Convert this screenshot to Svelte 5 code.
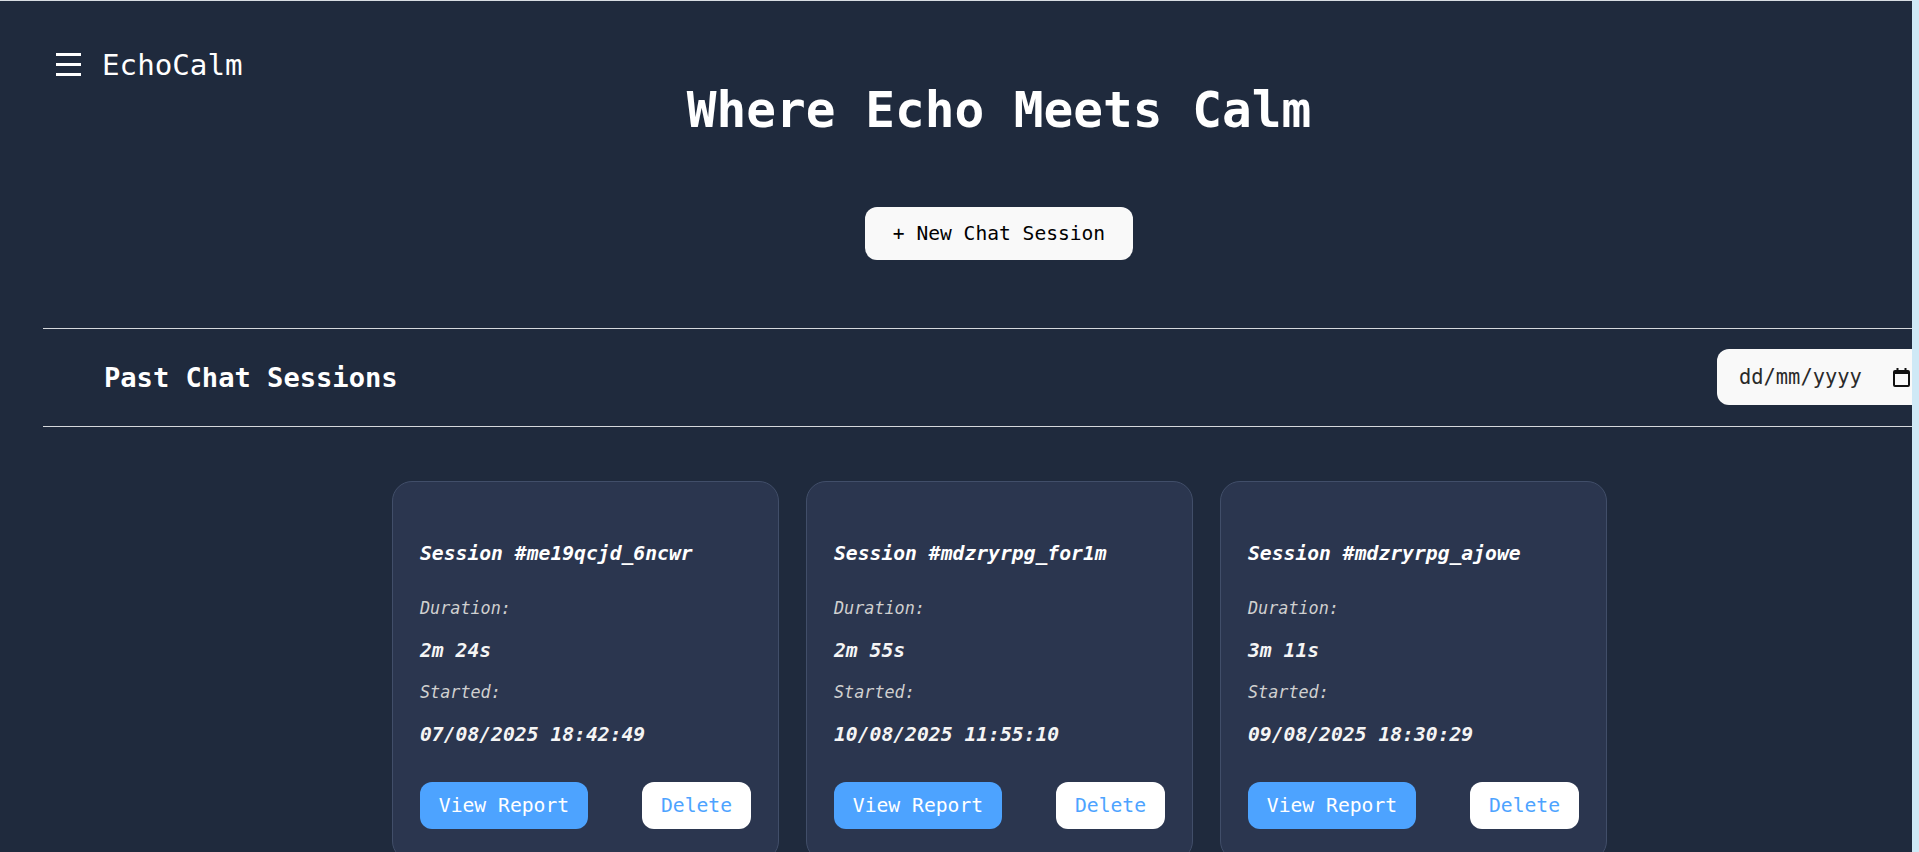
<script>
  const sessions = [
    { id: "me19qcjd_6ncwr", duration: "2m 24s", started: "07/08/2025 18:42:49" },
    { id: "mdzryrpg_for1m", duration: "2m 55s", started: "10/08/2025 11:55:10" },
    { id: "mdzryrpg_ajowe", duration: "3m 11s", started: "09/08/2025 18:30:29" }
  ];
</script>

<div class="page">
  <div class="brand">
    <svg class="menu" width="25" height="24" viewBox="0 0 25 24" aria-hidden="true">
      <rect x="0" y="0" width="25" height="3" fill="#fff" />
      <rect x="0" y="10" width="25" height="3" fill="#fff" />
      <rect x="0" y="20" width="25" height="3" fill="#fff" />
    </svg>
    <span class="brand-name">EchoCalm</span>
  </div>

  <header class="hero">
    <h1>Where Echo Meets Calm</h1>
    <button class="new-session">+ New Chat Session</button>
  </header>

  <section class="past-head">
    <h2>Past Chat Sessions</h2>
    <div class="date-field">
      <span>dd/mm/yyyy</span>
      <svg width="17" height="19" viewBox="0 0 17 19" aria-hidden="true">
        <path fill="#111" d="M3.5 0h2v2h6V0h2v2H15a2 2 0 0 1 2 2v13a2 2 0 0 1-2 2H2a2 2 0 0 1-2-2V4a2 2 0 0 1 2-2h1.5V0zM2 6v11h13V6H2z" />
      </svg>
    </div>
  </section>

  <section class="cards">
    {#each sessions as s}
      <article class="card">
        <h3>Session #{s.id}</h3>
        <p class="label">Duration:</p>
        <p class="value">{s.duration}</p>
        <p class="label started">Started:</p>
        <p class="value">{s.started}</p>
        <div class="actions">
          <button class="view">View Report</button>
          <button class="delete">Delete</button>
        </div>
      </article>
    {/each}
  </section>
</div>

<style>
  :global(body) {
    background: #cfe9f6;
    overflow: hidden;
  }

  .page {
    box-sizing: border-box;
    width: 1912px;
    height: 852px;
    padding-left: 43px;
    overflow: hidden;
    background: #1f2a3d;
    border-top: 1px solid #d8dde3;
    font-family: "DejaVu Sans Mono", "Liberation Mono", monospace;
    color: #fff;
  }

  .brand {
    display: flex;
    align-items: center;
    gap: 21px;
    height: 32px;
    margin: 48px 0 0 13px;
  }

  .menu {
    flex: none;
  }

  .brand-name {
    font-size: 29.2px;
    line-height: 32px;
  }

  .hero {
    display: flex;
    flex-direction: column;
    align-items: center;
    padding-left: 43px;
  }

  h1 {
    margin: -2px 0 0;
    font-size: 49.4px;
    line-height: 62px;
    font-weight: 700;
  }

  .new-session {
    width: 268px;
    height: 53px;
    margin-top: 66px;
    padding: 0;
    border: none;
    border-radius: 12px;
    background: #f9f9f9;
    color: #000;
    font: inherit;
    font-size: 19.6px;
  }

  .past-head {
    box-sizing: border-box;
    display: flex;
    align-items: center;
    justify-content: space-between;
    width: 1900px;
    height: 99px;
    margin-top: 68px;
    padding: 0 8px 0 61px;
    border-top: 1px solid #d5d8dc;
    border-bottom: 1px solid #d5d8dc;
  }

  h2 {
    margin: 0;
    font-size: 27.1px;
    font-weight: 700;
  }

  .date-field {
    box-sizing: border-box;
    display: flex;
    align-items: center;
    justify-content: space-between;
    width: 218px;
    height: 56px;
    margin-bottom: 1px;
    padding: 0 25px 0 22px;
    border-radius: 12px;
    background: #f9f9f9;
    color: #2a2a2a;
    font-size: 20.4px;
  }

  .cards {
    display: flex;
    justify-content: center;
    gap: 27px;
    margin-top: 54px;
    padding-left: 44px;
  }

  .card {
    box-sizing: border-box;
    width: 387px;
    height: 380px;
    padding: 60px 27px 0;
    border: 1px solid #414e69;
    border-radius: 20px;
    background: #2b364f;
  }

  h3 {
    margin: 0 0 31px;
    font-size: 19.7px;
    line-height: 24px;
    font-style: italic;
    font-weight: 700;
  }

  p {
    margin: 0;
  }

  .label {
    font-size: 16.8px;
    line-height: 22px;
    font-style: italic;
    color: #d0d0d0;
  }

  .value {
    margin-top: 20px;
    font-size: 19.7px;
    line-height: 24px;
    font-style: italic;
    font-weight: 700;
    color: #f5f5f5;
  }

  .started {
    margin-top: 18px;
  }

  .actions {
    display: flex;
    justify-content: space-between;
    margin-top: 35px;
  }

  .actions button {
    height: 47px;
    padding: 0;
    border: none;
    border-radius: 12px;
    font: inherit;
    font-size: 19.7px;
  }

  .view {
    width: 168px;
    background: #4da3ff;
    color: #fff;
  }

  .delete {
    width: 109px;
    background: #fff;
    color: #4da3ff;
  }
</style>
